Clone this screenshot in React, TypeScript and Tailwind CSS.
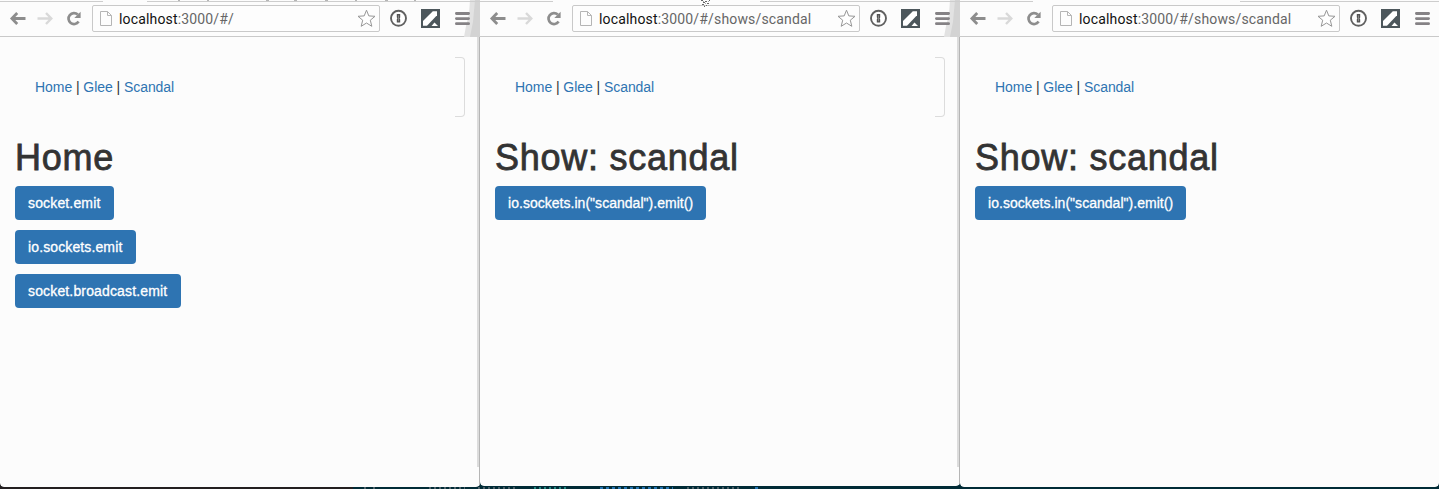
import React from "react";

function Toolbar({ path, shade }: { path: string; shade: boolean }) {
  return (
    <div className="relative flex h-9 shrink-0 items-start border-b border-[#c9c9c9] bg-[#fcfcfc]">
      {shade && (
        <svg className="absolute right-0 -top-px" width="19" height="37" viewBox="0 0 19 37">
          <path d="M9 0H19V37H3L5 26L8 14Z" fill="#e2e2e2" />
          <path d="M14 0H19V37H9L12 22Z" fill="#d3d3d3" />
        </svg>
      )}
      <svg className="relative ml-[9px] mt-[10px] shrink-0" width="17" height="15" viewBox="0 0 17 15" fill="none" stroke="#8d8d8d" strokeWidth="2.8">
        <path d="M8.2 2L2.9 7.5L8.2 13M3 7.5H16.5" />
      </svg>
      <svg className="ml-[11px] mt-[10px] shrink-0" width="17" height="15" viewBox="0 0 17 15" fill="none" stroke="#d9d9d9" strokeWidth="2.4">
        <path d="M9 2L14.3 7.5L9 13M14 7.5H0.5" />
      </svg>
      <svg className="ml-[12px] mt-[10px] shrink-0" width="16" height="15" viewBox="0 0 16 15">
        <path d="M12.6 10.6A5.5 5.5 0 1 1 11.8 3.6" fill="none" stroke="#8d8d8d" strokeWidth="2.7" />
        <path d="M14.6 0.8V7H8.3Z" fill="#8d8d8d" />
      </svg>
      <div className="relative ml-[10px] mt-1 flex h-[27px] w-[288px] shrink-0 items-center rounded-[2px] border border-[#c9c9c9] bg-[#fdfdfd]">
        <svg className="ml-[7px] shrink-0" width="12" height="15" viewBox="0 0 12 15" fill="none" stroke="#b5b5b5">
          <path d="M.5 .5H7.5L11.5 4.5V14.5H.5ZM7.5 .5V4.5H11.5" />
        </svg>
        <div className="ml-[7px] whitespace-nowrap font-['Roboto',sans-serif] text-[14px] leading-[18px] tracking-[0.16px] text-[#666]">
          <span className="text-[#111]">localhost</span>
          {path}
        </div>
        <svg className="absolute right-[3px] top-[3px]" width="19" height="19" viewBox="0 0 19 19" fill="#fff" stroke="#969696" strokeLinejoin="round">
          <path d="M9.5 1.2L11.8 6.9L18 7.3L13.3 11.2L14.8 17.3L9.5 14L4.2 17.3L5.7 11.2L1 7.3L7.2 6.9Z" />
        </svg>
      </div>
      <svg className="relative ml-[10px] mt-2 shrink-0" width="18" height="18" viewBox="0 0 18 18">
        <circle cx="8.5" cy="9.3" r="7.5" fill="#fff" stroke="#606060" strokeWidth="1.9" />
        <path d="M6.8 4.9H10.2V8.4L9.6 9.4L10.2 10.4V13.6H6.8V10.2L7.4 9.2L6.8 8.2Z" fill="#555" />
        <path d="M8.5 6.4V12.2" stroke="#aaa" strokeWidth="0.6" />
      </svg>
      <svg className="relative ml-[13px] mt-2 shrink-0" width="19" height="19" viewBox="0 0 19 19">
        <path d="M0 0H19V19H0Z" fill="#4c565b" />
        <path d="M2 16.8V12L11.8 2.2H16V6.2L6 16.8Z" fill="#fff" />
        <path d="M10.5 17L13.5 13.5L17 17Z" fill="#fff" />
      </svg>
      <svg className="relative ml-[15px] mt-[11px] shrink-0" width="15" height="14" viewBox="0 0 15 14" stroke="#858285" strokeWidth="2.8" strokeLinecap="round">
        <path d="M1.4 1.5H13.6M1.4 6.6H13.6M1.4 11.7H13.6" />
      </svg>
    </div>
  );
}

type PaneProps = {
  path: string;
  title: string;
  buttons: { label: string; width: string }[];
  width: string;
  tab: string;
  edge: boolean;
};

function Pane({ path, title, buttons, width, tab, edge }: PaneProps) {
  return (
    <section className={`relative flex h-[489px] shrink-0 flex-col overflow-hidden ${width}`}>
      <div className="h-px shrink-0 bg-[#fcfcfc]" />
      <div className="relative z-10 flex h-0 shrink-0">
        <div className="h-px w-full bg-[#cdcdcd]">
          <div className={`h-px bg-[#fcfcfc] ${tab}`} />
        </div>
      </div>
      <Toolbar path={path} shade={edge} />
      <div className="relative flex min-h-0 flex-1 flex-col items-start rounded-b-[4px] bg-[#fcfcfc] pl-[15px] font-['Liberation_Sans',Arial,sans-serif]">
        <div className="mt-5 flex h-[60px] w-[450px] items-center pl-5">
          <nav className="whitespace-nowrap text-[14px] leading-5 tracking-[-0.06px] text-[#333]">
            <a className="text-[#2e74b2]">Home</a> | <a className="text-[#2e74b2]">Glee</a> | <a className="text-[#2e74b2]">Scandal</a>
          </nav>
          {edge && <div className="ml-auto h-[60px] w-[10px] rounded-r-[4px] border border-l-0 border-[#dcdcdc]" />}
        </div>
        <h1 className="mt-[21px] whitespace-nowrap text-[36px] leading-10 tracking-[0.74px] text-[#333] [-webkit-text-stroke:0.8px_#333]">{title}</h1>
        <div className="mt-2 flex flex-col items-start gap-[10px]">
          {buttons.map((b) => (
            <button key={b.label} className={`h-[34px] whitespace-nowrap rounded-[4px] bg-[#2e74b2] pl-[13px] text-left text-[14px] leading-5 text-white [-webkit-text-stroke:0.3px_#fff] ${b.width}`}>
              {b.label}
            </button>
          ))}
        </div>
        {edge && <div className="absolute right-0 top-0 h-[430px] w-[3px] border-r border-[#b5b5b5] bg-[#dcdcdc]" />}
        {edge && <div className="absolute bottom-0 right-0 h-5 w-px bg-[#b5b5b5]" />}
      </div>
    </section>
  );
}

const showButtons = [{ label: 'io.sockets.in("scandal").emit()', width: "w-[211px] tracking-[0.03px]" }];

export default function App() {
  return (
    <main className="relative flex h-[489px] w-[1439px] overflow-hidden bg-[#002b36]">
      <div className="absolute bottom-0 left-0 h-10 w-[353px] bg-[#231f20]" />
      <div className="relative flex">
        <div className="h-[487px] overflow-hidden rounded-b-[4px] [&>section]:h-[487px]">
          <Pane
            path=":3000/#/"
            title="Home"
            width="w-[480px]"
            tab="ml-[103px] w-[44px]"
            edge
            buttons={[
              { label: "socket.emit", width: "w-[99px] tracking-[0.15px]" },
              { label: "io.sockets.emit", width: "w-[121px] tracking-[0.12px]" },
              { label: "socket.broadcast.emit", width: "w-[166px] tracking-[0.15px]" },
            ]}
          />
        </div>
        <div className="h-[486px] overflow-hidden rounded-b-[4px] [&>section]:h-[486px]">
          <Pane path=":3000/#/shows/scandal" title="Show: scandal" width="w-[480px]" tab="ml-[73px] w-[207px]" edge buttons={showButtons} />
        </div>
        <div className="h-[487px] overflow-hidden rounded-b-[4px] [&>section]:h-[487px]">
          <Pane path=":3000/#/shows/scandal" title="Show: scandal" width="w-[479px]" tab="ml-[73px] w-[207px]" edge={false} buttons={showButtons} />
        </div>
      </div>
      <svg className="absolute left-0 top-0 z-20" width="720" height="8" viewBox="0 0 720 8">
        <path d="M178 .5H180M207 .5H209M266 .5H269M294 .5H297M325 .5H328M355 .5H357M385 .5H388M414 .5H416" stroke="#b5b5b5" />
        <path d="M701 .5H703M705 1.5H707M709 .5H710M703 2.5H705M707 3.5H709M702 4.5H704M706 5.5H707M704 6.5H705" stroke="#666" />
        <path d="M703 1.5H704M708 1.5H709M705 3.5H706M704 5.5H705M708 5.5H709" stroke="#aaa" />
      </svg>
      <svg className="absolute bottom-0 left-[353px]" width="420" height="2" viewBox="0 0 420 2">
        <path d="M11 1H15M20 1H24M76 1H112M125 1H163" stroke="#65737a" strokeWidth="1.5" strokeDasharray="2 3" />
        <path d="M181 1H215" stroke="#218a82" strokeWidth="2" strokeDasharray="2 3" />
        <path d="M247 1H320M402 1H405" stroke="#2675b4" strokeWidth="2" strokeDasharray="3 3" />
        <path d="M334 1H386" stroke="#65737a" strokeWidth="1.5" strokeDasharray="2 3" />
      </svg>
    </main>
  );
}
